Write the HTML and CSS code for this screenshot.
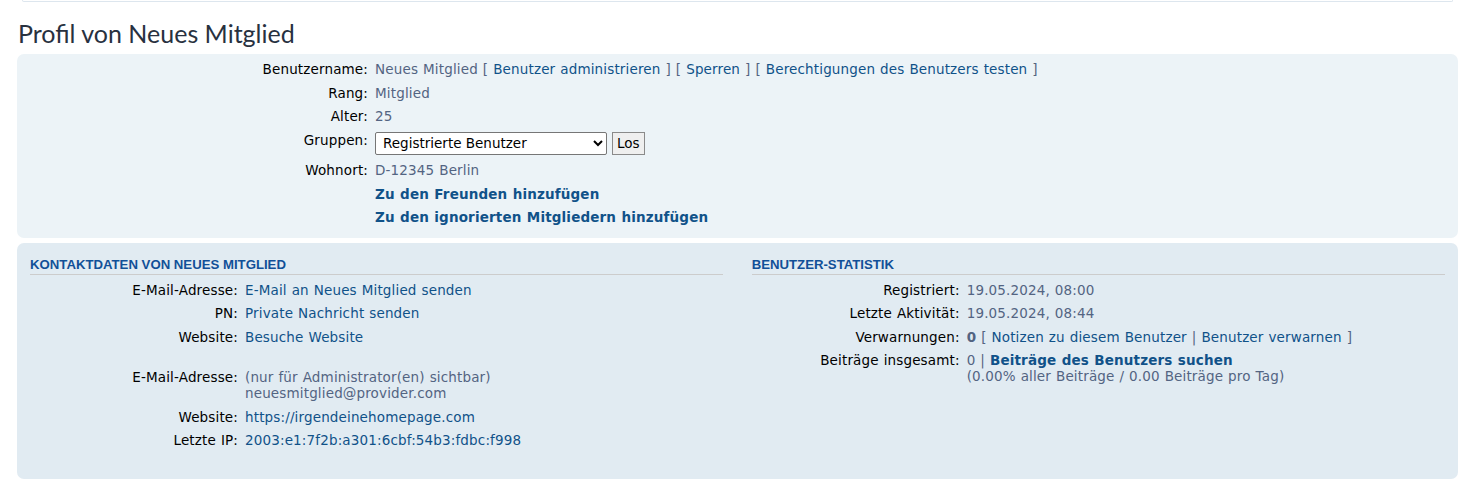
FILE: index.html
```html
<!DOCTYPE html>
<html lang="de">
<head>
<meta charset="utf-8">
<title>Profil von Neues Mitglied</title>
<link rel="stylesheet" href="styles.css">
</head>
<body>
<div class="topbar"></div>
<h2 class="page-title">Profil von Neues Mitglied</h2>

<div class="panel bg1">
  <dl class="details main">
    <dt>Benutzername:</dt>
    <dd>Neues Mitglied <span class="br">[</span> <a href="#">Benutzer administrieren</a> <span class="br">]</span> <span class="br">[</span> <a href="#">Sperren</a> <span class="br">]</span> <span class="br">[</span> <a href="#">Berechtigungen des Benutzers testen</a> <span class="br">]</span></dd>
    <dt>Rang:</dt>
    <dd>Mitglied</dd>
    <dt>Alter:</dt>
    <dd>25</dd>
    <dt class="form-dt">Gruppen:</dt>
    <dd class="form-row">
      <select class="sel"><option>Registrierte Benutzer</option></select>
      <button class="btn" type="button">Los</button>
    </dd>
    <dt>Wohnort:</dt>
    <dd>D-12345 Berlin</dd>
    <dt></dt>
    <dd><a href="#" class="strong">Zu den Freunden hinzufügen</a></dd>
    <dt></dt>
    <dd><a href="#" class="strong">Zu den ignorierten Mitgliedern hinzufügen</a></dd>
  </dl>
</div>

<div class="panel bg2 cols">
  <div class="column">
    <h3>Kontaktdaten von Neues Mitglied</h3>
    <dl class="details">
      <dt>E-Mail-Adresse:</dt>
      <dd><a href="#">E-Mail an Neues Mitglied senden</a></dd>
      <dt>PN:</dt>
      <dd><a href="#">Private Nachricht senden</a></dd>
      <dt>Website:</dt>
      <dd><a href="#">Besuche Website</a></dd>
    </dl>
    <div class="spacer"></div>
    <dl class="details">
      <dt>E-Mail-Adresse:</dt>
      <dd class="tight">(nur für Administrator(en) sichtbar)<br>neuesmitglied@provider.com</dd>
      <dt>Website:</dt>
      <dd><a href="#">https://irgendeinehomepage.com</a></dd>
      <dt>Letzte IP:</dt>
      <dd><a href="#">2003:e1:7f2b:a301:6cbf:54b3:fdbc:f998</a></dd>
    </dl>
  </div>
  <div class="column">
    <h3>Benutzer-Statistik</h3>
    <dl class="details">
      <dt>Registriert:</dt>
      <dd>19.05.2024, 08:00</dd>
      <dt>Letzte Aktivität:</dt>
      <dd>19.05.2024, 08:44</dd>
      <dt>Verwarnungen:</dt>
      <dd><strong>0</strong> [ <a href="#">Notizen zu diesem Benutzer</a> | <a href="#">Benutzer verwarnen</a> ]</dd>
      <dt>Beiträge insgesamt:</dt>
      <dd class="tight">0 | <a href="#" class="strong">Beiträge des Benutzers suchen</a><br>(0.00% aller Beiträge / 0.00 Beiträge pro Tag)</dd>
    </dl>
  </div>
</div>
</body>
</html>
```

FILE: styles.css
```css
html, body {
  margin: 0;
  padding: 0;
  background: #ffffff;
}

body {
  font-family: "DejaVu Sans", Verdana, sans-serif;
  font-size: 13.5px;
  letter-spacing: 0.15px;
  word-spacing: 0.5px;
  color: #000000;
}

.topbar {
  height: 1px;
  margin: 0 22px;
  border: 1px solid #dde6ee;
  border-top: none;
  border-radius: 0 0 6px 6px;
  background: #ffffff;
}

.page-title {
  margin: 16px 0 6px 18px;
  font-family: "Lato", "Open Sans", sans-serif;
  font-weight: normal;
  font-size: 25px;
  letter-spacing: 0;
  word-spacing: 0;
  line-height: 30px;
  color: #28313f;
}

.panel {
  margin: 0 17px 5px;
  border-radius: 7px;
}

.bg1 {
  background: #ecf3f7;
  padding: 7px 10px 5px;
}

.bg2 {
  background: #e1ebf2;
}

.cols {
  display: flex;
  justify-content: space-between;
  padding: 14px 13px 23px;
}

.column {
  width: 49%;
}

.details {
  display: grid;
  grid-template-columns: 30% 1fr;
  margin: 0;
  line-height: 17px;
}

.details.main {
  width: 80%;
}

.details dt {
  text-align: right;
  color: #000000;
  margin: 0 0 6.5px;
  white-space: nowrap;
}

.details dd {
  margin: 0 0 6.5px;
  padding-left: 7px;
  color: #536482;
}

.details dd.tight {
  line-height: 16px;
  margin-bottom: 7.5px;
}

.details dd strong {
  font-weight: bold;
  color: #536482;
}

a {
  color: #105289;
  text-decoration: none;
}

a.strong {
  font-weight: bold;
}

.details .form-dt {
  margin-bottom: 7.5px;
}

.details .form-row {
  display: flex;
  align-items: flex-start;
  gap: 5px;
  margin-bottom: 7.5px;
}

.sel {
  width: 232px;
  height: 23px;
  font-family: "DejaVu Sans", Verdana, sans-serif;
  font-size: 13.5px;
  color: #000;
  background: #fff;
  border: 1px solid #767676;
  border-radius: 2px;
  padding: 0 3px;
}

.btn {
  height: 23px;
  padding: 0 4px;
  font-family: "DejaVu Sans", Verdana, sans-serif;
  font-size: 13.5px;
  color: #000;
  background: #efefef;
  border: 1px solid #8a8a8a;
  border-radius: 0;
}

h3 {
  margin: 0 0 7px;
  padding-bottom: 2px;
  font-family: "Liberation Sans", Arial, sans-serif;
  font-weight: bold;
  font-size: 13.2px;
  letter-spacing: 0;
  word-spacing: 0;
  line-height: 15px;
  text-transform: uppercase;
  color: #115098;
  border-bottom: 1px solid #cccccc;
}

.spacer {
  height: 17px;
}
```
